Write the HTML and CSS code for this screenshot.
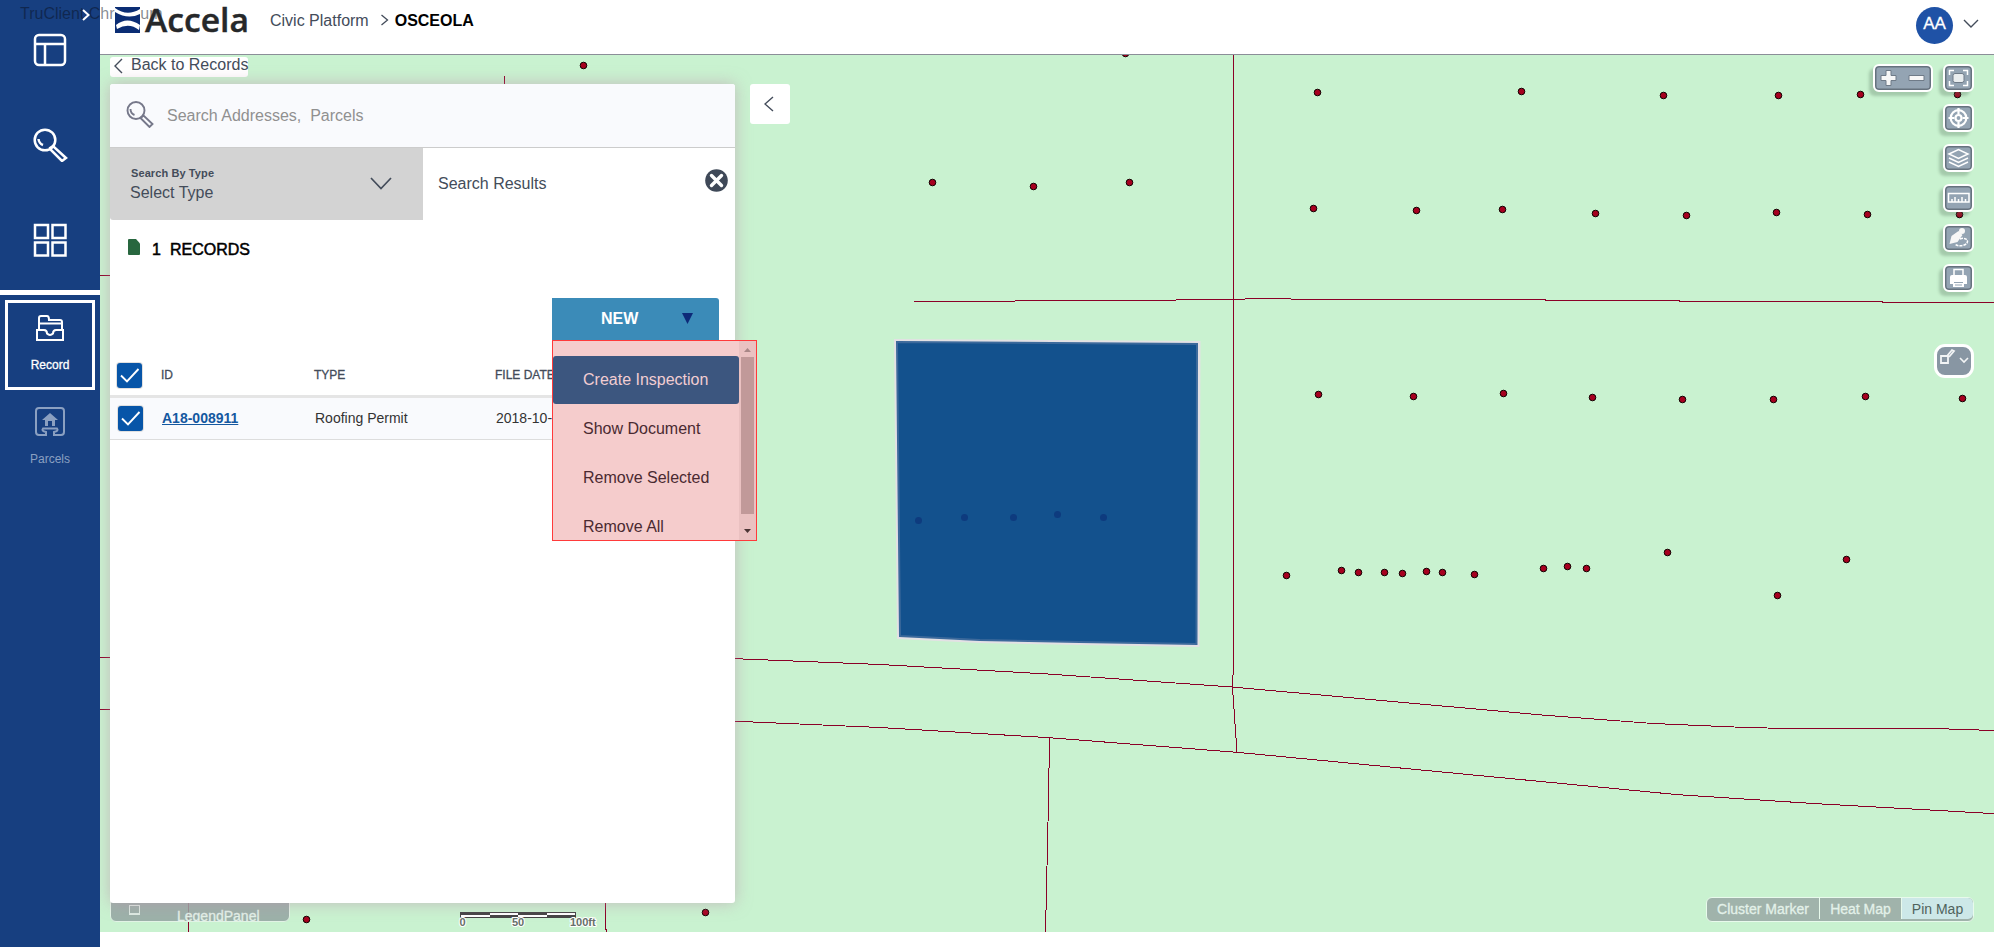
FILE: index.html
```html
<!DOCTYPE html>
<html lang="en">
<head>
<meta charset="utf-8">
<title>Civic Platform</title>
<link rel="stylesheet" href="styles.css">
</head>
<body>
<div class="app">
  <nav class="sidebar">
    <span class="watermark">TruClient Chromium</span>
    <svg class="expand" width="8" height="12" viewBox="0 0 8 12"><path d="M1 1l5.500 5-5.500 5"/></svg>
    <a class="nav-item"><svg width="34" height="34" viewBox="0 0 34 34"><rect x="2" y="2" width="30" height="30" rx="4"/><path d="M2 11h30M12 11v21"/></svg></a>
    <a class="nav-item"><svg width="36" height="34" viewBox="0 0 36 34"><circle cx="13" cy="12" r="10.300"/><path d="M6.500 11c.3 3 2 5 4.500 6M18 20l3-2 13 12-4 3-12-12z"/></svg></a>
    <a class="nav-item"><svg width="34" height="34" viewBox="0 0 34 34"><path d="M2 2h13v13H2zM19.500 2h13v13h-13zM2 19.500h13v13H2zM19.500 19.500h13v13h-13z"/></svg></a>
    <a class="module active">
      <svg width="30" height="28" viewBox="0 0 30 28"><path d="M4 15V4q0-2 2-2h6q2 0 2 4h11q2 0 2 2v7M4 9.500h23M2 16h7q3 0 3 3.500 3 3 6 0 0-3.500 3-3.500h7v10H2z"/></svg>
      <span>Record</span>
    </a>
    <a class="module dim">
      <svg width="30" height="30" viewBox="0 0 30 30"><path d="M11 28H4q-3 0-3-3V4q0-3 3-3h22q3 0 3 3v21q0 3-3 3h-7v-3q5-1 3-3.500H8Q6 24 11 25z"/><path class="solid" d="M15 6l8 7h-3v6h-3v-5h-4v5h-3v-6H7z"/></svg>
      <span>Parcels</span>
    </a>
  </nav>

  <div class="main">
    <header class="topbar">
      <svg class="logo" width="136" height="34" viewBox="0 0 136 34">
        <rect x="0" y="2" width="25" height="26" fill="#0b2d74"/>
        <path d="M0 3q12 9 25 1v5q-12 6-25-2zM1 20q11-9 24 0l-1 5q-10-8-22-1z" fill="#fff"/>
        <text x="30" y="27" textLength="104" lengthAdjust="spacingAndGlyphs">Accela</text>
      </svg>
      <span class="crumb">Civic Platform</span>
      <svg class="sep" width="9" height="12" viewBox="0 0 9 12"><path d="M1.500 1l6 5-6 5"/></svg>
      <strong class="crumb-now">OSCEOLA</strong>
      <span class="avatar">AA</span>
      <svg class="caret" width="16" height="10" viewBox="0 0 16 10"><path d="M1 1l7 7 7-7"/></svg>
    </header>

    <section class="stage">
      <svg class="map" width="1894" height="877" viewBox="100 55 1894 877">
        <defs><circle id="p" r="3.300" fill="#a6001f" stroke="#100" stroke-width="1"/></defs>
        <g class="lines">
          <path d="M504.500 76v9M100 275.500h12M100 657.500h12M100 709.500h12M188.500 900v32M605.500 900v30M606.500 929v3"/>
          <path d="M914 301.500L1120 300.500 1233 299.500 1257 298.500 1324 299.500H1545V300.500H1679V301.500H1882V302.500H1994"/>
          <path d="M1233.500 55V663L1232.500 687 1237 752.500"/>
          <path d="M730 658.500L880 664.500 1048 674 1232 687 1542 715 1653 723.500 1746 727.500 1788 728.500 1934 728.500 1994 730.500"/>
          <path d="M730 721L880 727.500 1049 737.700 1237 752.300 1539 781.300 1678 794.700 1815 803.600 1994 813.600"/>
          <path d="M1049.500 738L1048.500 800 1045.500 932"/>
        </g>
        <path d="M896 341L1198.500 343 1197.500 645 1080 643 980 641 899 637z" fill="none" stroke="#e3e1e4" stroke-width="4"/>
        <path d="M897 342L1197 344 1196.500 644 1080 642 980 640 900 636z" fill="#13518d" stroke="#3c699b" stroke-width="2"/>
        <g fill="#0e3b7e"><circle cx="918.500" cy="520.500" r="3.500"/><circle cx="964.500" cy="517.500" r="3.500"/><circle cx="1013.500" cy="517.500" r="3.500"/><circle cx="1057.500" cy="514.500" r="3.500"/><circle cx="1103.500" cy="517.500" r="3.500"/></g>
        <use href="#p" x="583.500" y="65.500"/><use href="#p" x="1125.500" y="53.500"/><use href="#p" x="932.500" y="182.500"/><use href="#p" x="1033.500" y="186.500"/><use href="#p" x="1129.500" y="182.500"/>
        <use href="#p" x="306.500" y="919.500"/><use href="#p" x="705.500" y="912.500"/>
        <use href="#p" x="1317.500" y="92.500"/><use href="#p" x="1521.500" y="91.500"/><use href="#p" x="1663.500" y="95.500"/><use href="#p" x="1778.500" y="95.500"/><use href="#p" x="1860.500" y="94.500"/><use href="#p" x="1957.500" y="94.500"/>
        <use href="#p" x="1313.500" y="208.500"/><use href="#p" x="1416.500" y="210.500"/><use href="#p" x="1502.500" y="209.500"/><use href="#p" x="1595.500" y="213.500"/><use href="#p" x="1686.500" y="215.500"/><use href="#p" x="1776.500" y="212.500"/><use href="#p" x="1867.500" y="214.500"/><use href="#p" x="1959.500" y="214.500"/>
        <use href="#p" x="1318.500" y="394.500"/><use href="#p" x="1413.500" y="396.500"/><use href="#p" x="1503.500" y="393.500"/><use href="#p" x="1592.500" y="397.500"/><use href="#p" x="1682.500" y="399.500"/><use href="#p" x="1773.500" y="399.500"/><use href="#p" x="1865.500" y="396.500"/><use href="#p" x="1962.500" y="398.500"/>
        <use href="#p" x="1286.500" y="575.500"/><use href="#p" x="1341.500" y="570.500"/><use href="#p" x="1358.500" y="572.500"/><use href="#p" x="1384.500" y="572.500"/><use href="#p" x="1402.500" y="573.500"/><use href="#p" x="1426.500" y="571.500"/><use href="#p" x="1442.500" y="572.500"/><use href="#p" x="1474.500" y="574.500"/><use href="#p" x="1543.500" y="568.500"/><use href="#p" x="1567.500" y="566.500"/><use href="#p" x="1586.500" y="568.500"/><use href="#p" x="1667.500" y="552.500"/><use href="#p" x="1777.500" y="595.500"/><use href="#p" x="1846.500" y="559.500"/>
      </svg>

      <a class="back"><svg width="10" height="16" viewBox="0 0 10 16"><path d="M9 1L2 8l7 7"/></svg>Back to Records</a>

      <div class="legend"><i class="legend-box"></i><span>LegendPanel</span></div>
      <svg class="scale" width="150" height="22" viewBox="0 0 150 22">
        <path d="M0 0h116v6H0z" fill="#444"/><path d="M1 3h29v2H1zM30 1h28v2H30zM58 3h29v2H58zM87 1h28v2H87z" fill="#fff"/>
        <text x="-.5" y="14">0</text><text x="52" y="14">50</text><text x="110" y="14">100ft</text>
      </svg>

      <div class="panel">
        <div class="search"><svg width="28" height="27" viewBox="0 0 28 27"><circle cx="10" cy="9.500" r="8.500"/><path d="M4.500 8c0 3 1.500 5 4 6M14.500 17l3-2.500 9 8.500-3 3z"/></svg><span>Search Addresses,&nbsp; Parcels</span></div>
        <div class="filters">
          <div class="type"><div><b>Search By Type</b><span>Select Type</span></div><svg width="22" height="13" viewBox="0 0 22 13"><path d="M1 1l10 10.500L21 1"/></svg></div>
          <div class="results"><span>Search Results</span><svg width="23" height="23" viewBox="0 0 23 23"><circle cx="11.500" cy="11.500" r="11.300" fill="#3f4958"/><path d="M6.500 6.500l10 10M16.500 6.500l-10 10" stroke="#fff" stroke-width="3.400" stroke-linecap="round"/></svg></div>
        </div>
        <div class="count"><svg width="12" height="16" viewBox="0 0 12 16"><path d="M0 1q0-1 1-1h7l4 4.500V15q0 1-1 1H1q-1 0-1-1z" fill="#28673f"/></svg><span>1</span><span>RECORDS</span></div>
        <div class="actions"><button class="new"><span>NEW</span><svg width="11" height="11" viewBox="0 0 11 11"><path d="M0 0h11L5.500 11z" fill="#0d2a78"/></svg></button></div>
        <div class="row head"><i class="check"><svg width="20" height="15" viewBox="0 0 20 15"><path d="M1 7.500l6 6L18.500 1"/></svg></i><span class="id">ID</span><span class="kind">TYPE</span><span>FILE DATE</span></div>
        <div class="row record"><i class="check"><svg width="20" height="15" viewBox="0 0 20 15"><path d="M1 7.500l6 6L18.500 1"/></svg></i><a class="id">A18-008911</a><span class="kind">Roofing Permit</span><span class="date">2018-10-</span></div>
      </div>

      <div class="menu">
        <div class="menu-items"><a class="hot">Create Inspection</a><a>Show Document</a><a>Remove Selected</a><a>Remove All</a></div>
        <div class="scroll"><svg width="7" height="4" viewBox="0 0 7 4"><path d="M0 4L3.500 0 7 4z" fill="#a98787"/></svg><i class="thumb"></i><svg width="7" height="4" viewBox="0 0 7 4"><path d="M0 0h7L3.500 4z" fill="#4b3535"/></svg></div>
      </div>

      <button class="collapse"><svg width="10" height="16" viewBox="0 0 10 16"><path d="M9 1L1 8l8 7"/></svg></button>

      <div class="zoomer"><svg width="57" height="24" viewBox="0 0 57 24"><path d="M11 4.500h5v5h5v5h-5v5h-5v-5H6v-5h5zM34 9.500h15v5H34z" fill="#f7f7f7" stroke="#6f7b88"/></svg></div>
      <div class="tools">
        <b class="tool"><svg viewBox="0 0 27 24"><path d="M4.500 9V4.500H9M18 4.500h4.500V9M4.500 15v4.500H9M18 19.500h4.500V15" class="thin"/><rect x="8" y="7.500" width="11" height="9" rx="2" fill="#e9edef" stroke="#6f7b88" stroke-width="1"/></svg></b>
        <b class="tool"><svg viewBox="0 0 27 24"><circle cx="13.500" cy="12" r="7.800"/><circle cx="13.500" cy="12" r="3"/><path d="M13.500 2v6M13.500 16v6M3.500 12h6M17.500 12h6"/></svg></b>
        <b class="tool"><svg viewBox="0 0 27 24"><path d="M4 8l9.500-4.500L23 8l-9.500 4.500zM4 12l9.500 4.500L23 12M4 16l9.500 4.500L23 16" class="thin"/></svg></b>
        <b class="tool"><svg viewBox="0 0 27 24"><path class="thin" d="M3.500 7.500h20.500v8.500H3.500zM7 16v-3M10 16v-5M13.500 16v-3M17 16v-5M20.500 16v-3"/></svg></b>
        <b class="tool"><svg viewBox="0 0 27 24"><path d="M4.500 18l2-8 7-5 4 4-5 7z" fill="#f7f7f7" stroke="none"/><circle cx="17" cy="5" r="3" fill="#f7f7f7" stroke="none"/><path class="thin" stroke-dasharray="3 1" d="M15 13c5-2 9 1 7 4s-9 4-12 1"/></svg></b>
        <b class="tool"><svg viewBox="0 0 27 24"><path class="thin" d="M9 11V3.500h9V11"/><path d="M5 11q0-2 2-2h13q2 0 2 2v7h-3v3H8v-3H5z" fill="#fff" stroke="none"/><path d="M9 16.500h9M10 19h7" stroke="#94a4b3" stroke-width="1"/></svg></b>
      </div>
      <div class="draw"><svg width="34" height="28" viewBox="0 0 34 28"><path d="M4 9h7v7H4zM10 9l5-6 2 1-5 6" stroke-width="1.800"/><path d="M23 11l4 4 4-4" stroke-width="1.600"/></svg></div>
      <div class="modes"><span>Cluster Marker</span><span>Heat Map</span><span class="on">Pin Map</span></div>
    </section>
  </div>
</div>
</body>
</html>
```
FILE: styles.css
```css
* { box-sizing: border-box; }
body { margin: 0; background: #fff; font: 16px/20px "Liberation Sans", Arial, sans-serif; color: #434c5a; overflow: hidden; }
svg { display: block; fill: none; flex: none; }
.app { display: grid; grid-template-columns: 100px 1fr; height: 947px; }

.sidebar { position: relative; z-index: 1; background: #173f80; display: flex; flex-direction: column; }
.sidebar svg { stroke: #fff; stroke-width: 2.500; }
.watermark { position: absolute; left: 20px; top: 4px; white-space: nowrap; color: rgba(10, 15, 30, .5); }
.sidebar .expand { position: absolute; left: 82px; top: 9px; stroke-width: 2; }
.nav-item { height: 95px; display: flex; align-items: center; justify-content: center; }
.nav-item:nth-of-type(1) { height: 100px; }
.nav-item:nth-of-type(2) { height: 90px; }
.nav-item:nth-of-type(3) { height: 100px; }
.module { display: flex; flex-direction: column; align-items: center; font-size: 12px; color: #fff; }
.module.active { border: 3px solid #fff; margin: 10px 5px 0; height: 90px; padding-top: 11px; gap: 13px; -webkit-text-stroke: .3px #fff; position: relative; }
.module.active::before { content: ""; position: absolute; left: -8px; top: -13px; width: 100px; height: 5px; background: #fff; }
.module svg { stroke-width: 2; }
.module.dim { margin-top: 17px; gap: 12px; color: #8ba0c1; }
.module.dim svg { stroke: #8ba0c1; }
.module .solid { fill: #8ba0c1; stroke: none; }

.main { display: flex; flex-direction: column; }
.topbar { height: 55px; border-bottom: 1px solid #8b8e98; display: flex; align-items: flex-start; padding: 0 15px; }
.logo { margin-top: 5px; position: relative; z-index: 2; }
.logo text { font: 600 33px "Open Sans", "Noto Sans", sans-serif; fill: #26282a; stroke: #26282a; stroke-width: .4px; }
.crumb { margin: 11px 0 0 19px; }
.sep { margin: 14px 6px 0 11px; stroke: #434c5a; stroke-width: 1.300; }
.crumb-now { margin-top: 11px; color: #000; }
.avatar { margin: 7px 10px 0 auto; width: 37px; height: 37px; border-radius: 50%; background: #1f52a6; color: #fff; text-align: center; font-size: 17px; line-height: 34px; -webkit-text-stroke: .3px #fff; }
.caret { margin: 19px 0 0; stroke: #434c5a; stroke-width: 1.400; }

.stage { position: relative; height: 877px; background: #c9f2d0; overflow: hidden; }
.lines path { stroke: #8b0027; stroke-width: 1; shape-rendering: crispEdges; }

.back { position: absolute; left: 10px; top: 2px; height: 20px; width: 138px; display: flex; align-items: center; gap: 8px; padding: 0 0 5px 3px; background: #fff; border-radius: 3px; line-height: 14px; white-space: nowrap; }
.back svg, .collapse svg { stroke: #434c5a; stroke-width: 1.400; }
.back svg { margin-top: 2px; }

.panel { position: absolute; left: 10px; top: 29px; width: 625px; height: 819px; background: #fff; border-radius: 3px; box-shadow: 0 0 16px rgba(190, 140, 170, .55); }
.search { height: 64px; background: #f9fafd; border-bottom: 1px solid #ccc; border-radius: 3px 3px 0 0; display: flex; padding: 17px 0 0 16px; gap: 13px; color: #909090; }
.search span { margin-top: 5px; }
.search svg { stroke: #76788a; stroke-width: 1.900; }
.filters { display: flex; height: 72px; }
.type { width: 313px; background: #d3d3d3; border-radius: 0 0 0 3px; display: flex; justify-content: space-between; padding: 18px 31px 0 20px; }
.type b { display: block; font-size: 11px; line-height: 14px; letter-spacing: .1px; padding-left: 1px; }
.type span { display: block; margin-top: 3px; }
.type svg { margin-top: 11px; stroke: #434c5a; stroke-width: 1.700; }
.results { flex: 1; display: flex; justify-content: space-between; padding: 20px 7px 0 15px; }
.results span { margin-top: 6px; }
.results svg { margin-top: 1px; }
.count { display: flex; padding: 19px 0 0 18px; height: 78px; color: #000; -webkit-text-stroke: .5px #000; }
.count svg { stroke: none; margin-right: 12px; }
.count span { margin-right: 9px; line-height: 21px; }
.actions { display: flex; justify-content: flex-end; padding-right: 16px; height: 58px; }
.new { width: 167px; height: 42px; border: 0; border-radius: 0 3px 0 0; background: #3b8bb8; color: #fff; font: bold 16px "Liberation Sans", Arial, sans-serif; display: flex; align-items: center; padding: 0 26px 0 49px; justify-content: space-between; }
.new svg { margin-bottom: 2px; }
.row { display: flex; align-items: center; }
.check { width: 25px; height: 25px; background: #0755a8; border-radius: 3px; display: flex; align-items: center; justify-content: center; box-shadow: 0 0 0 1px #e0e0e0; }
.check svg { stroke: #fff; stroke-width: 1.900; }
.head { height: 42px; border-bottom: 3px solid #e5e5e5; font-size: 12px; padding: 0 0 0 7px; -webkit-text-stroke: .3px #434c5a; }
.head span { margin-bottom: 2px; }
.head .id { margin-left: 19px; width: 153px; }
.head .kind { width: 181px; }
.record { height: 42px; background: #f9fafd; border-bottom: 1px solid #ddd; font-size: 14px; color: #333; padding-left: 8px; }
.record span, .record a { margin-bottom: 1px; }
.record .id { margin-left: 19px; width: 153px; color: #1558a0; font-weight: bold; text-decoration: underline; }
.record .kind { width: 181px; }

.menu { position: absolute; left: 452px; top: 285px; width: 205px; height: 201px; border: 1px solid #ff3a3a; background: #f5cccc; display: flex; overflow: hidden; }
.menu-items { width: 186px; padding-top: 15px; color: #4a2a31; }
.menu-items a { display: flex; align-items: center; height: 49px; padding: 0 0 2px 30px; }
.menu-items .hot { height: 48px; padding-bottom: 0; background: #3c567f; color: #f2cdd2; border-radius: 3px; margin-bottom: 1px; }
.scroll { width: 17px; background: #eac1c1; display: flex; flex-direction: column; align-items: center; padding: 7px 0; }
.thumb { width: 13px; height: 157px; margin: 5px 0 15px; background: #c19999; }

.collapse { position: absolute; left: 650px; top: 29px; width: 40px; height: 40px; padding: 0 0 0 14px; border: 0; border-radius: 3px; background: #fff; }

.legend { position: absolute; left: 10px; top: 830px; width: 180px; height: 37px; border: 1px solid #e2f4e6; border-radius: 6px; background: rgba(148, 166, 162, .85); color: #e2f0e8; font-size: 14px; overflow: hidden; display: flex; padding: 19px 0 0 18px; }
.legend-box { width: 11px; height: 10px; border: 1px solid #dcebe2; border-bottom-width: 2px; margin-right: 37px; }
.legend span { line-height: 16px; margin-top: 3px; -webkit-text-stroke: .3px; }
.scale { position: absolute; left: 360px; top: 857px; overflow: visible; }
.scale text { font: bold 11px "Liberation Sans", Arial, sans-serif; fill: #66706a; stroke: #fff; stroke-width: 2px; paint-order: stroke; }

.zoomer, .tool { background: #94a4b3; border: 2px solid #fff; border-radius: 6px; box-shadow: inset 0 0 0 1.500px #66727e, -4px 4px 3px rgba(80, 110, 85, .3); }
.zoomer { position: absolute; left: 1773px; top: 9px; width: 60px; height: 28px; }
.tools { position: absolute; left: 1843px; top: 9px; display: flex; flex-direction: column; gap: 12px; }
.tool { width: 31px; height: 28px; }
.tool svg { width: 27px; height: 24px; stroke: #fff; stroke-width: 2.200; }
.tool .thin { stroke-width: 1.500; }
.draw { position: absolute; left: 1834px; top: 289px; width: 40px; height: 34px; border: 3px solid #fff; border-radius: 11px; background: #8896a3; }
.draw svg { stroke: #f2f4f5; }
.modes { position: absolute; left: 1606px; top: 842px; height: 25px; width: 268px; border: 1px solid #e8faec; border-radius: 6px; background: #a0b3ab; color: #e3f1e9; font-size: 14px; line-height: 22px; display: flex; overflow: hidden; padding-bottom: 2px; -webkit-text-stroke: .3px; }
.modes span { width: 82px; text-align: center; border-left: 1px solid #e8faec; }
.modes span:first-child { width: 112px; border: 0; }
.modes .on { width: 72px; background: #cde8e8; color: #50635d; -webkit-text-stroke: 0; border-radius: 0 5px 5px 0; }
```
